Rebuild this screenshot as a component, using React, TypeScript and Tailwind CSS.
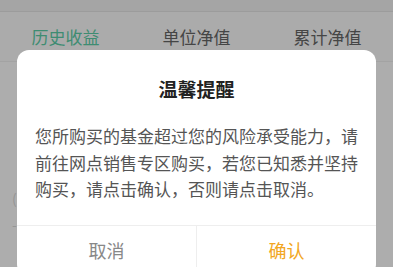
import React from 'react';

const font = { fontFamily: '"Noto Sans CJK SC", "Noto Sans", sans-serif' };

export default function App() {
  return (
    <div className="relative w-[393px] h-[267px] overflow-hidden bg-[#adadad]" style={font}>
      {/* page behind the overlay */}
      <div className="h-[12px] bg-[#a5a5a5] border-b border-[#9c9c9c]" />
      <div className="h-[50px] flex items-center bg-[#ababab] border-b border-[#a3a3a3]">
        <div className="flex-1 text-center text-[17px] text-[#3e8c72]">历史收益</div>
        <div className="flex-1 text-center text-[17px] text-[#454545]">单位净值</div>
        <div className="flex-1 text-center text-[17px] text-[#454545]">累计净值</div>
      </div>
      <div className="pl-[12px] pt-[123px] text-[14px] leading-[26px] text-[#959595]">
        <div>(</div>
        <div>-</div>
      </div>

      {/* dialog */}
      <div className="absolute left-[17px] top-[50px] w-[359px] rounded-[12px] bg-white">
        <div className="pt-[26px] text-center text-[19px] leading-[26px] font-bold text-[#222]">温馨提醒</div>
        <p className="px-[18px] pt-[21px] pb-[22px] text-[17px] leading-[26.5px] text-[#555]">
          您所购买的基金超过您的风险承受能力，请前往网点销售专区购买，若您已知悉并坚持购买，请点击确认，否则请点击取消。
        </p>
        <div className="flex border-t border-[#eeeeee]">
          <div className="flex-1 h-[50px] flex items-center justify-center text-[18px] text-[#888]">取消</div>
          <div className="flex-1 h-[50px] flex items-center justify-center text-[18px] text-[#f2a623] border-l border-[#eeeeee]">确认</div>
        </div>
      </div>
    </div>
  );
}
